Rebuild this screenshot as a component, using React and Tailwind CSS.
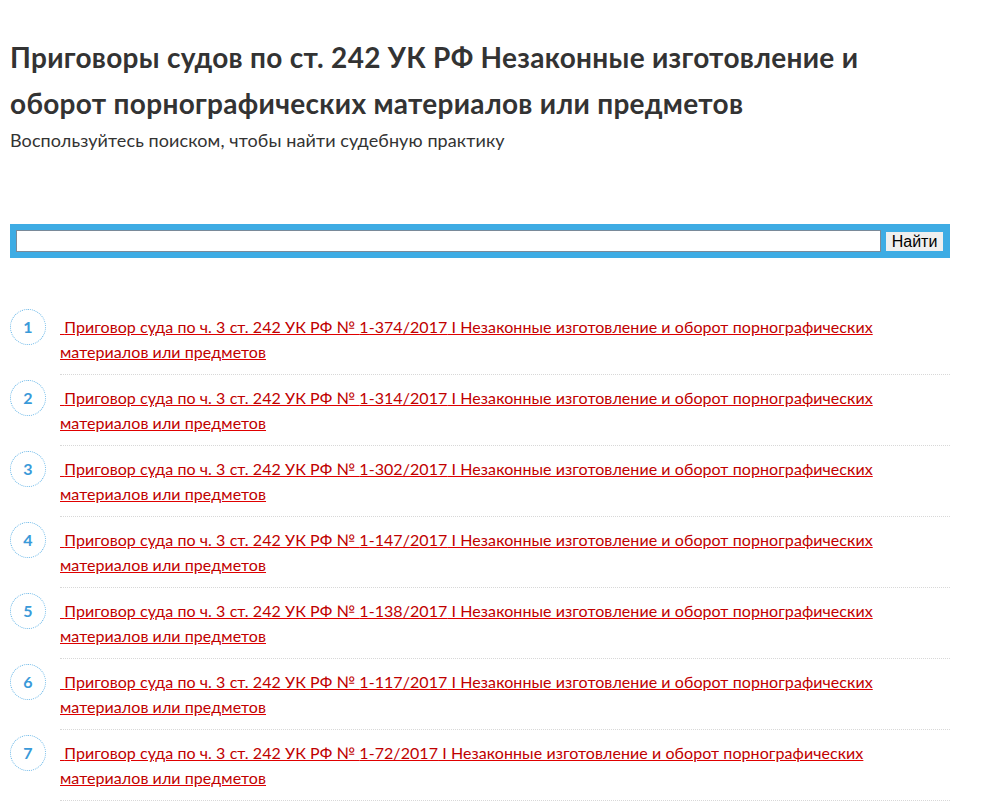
import React from 'react';

const items = [
  '1-374/2017',
  '1-314/2017',
  '1-302/2017',
  '1-147/2017',
  '1-138/2017',
  '1-117/2017',
  '1-72/2017',
];

export default function App() {
  return (
    <div className="min-h-screen bg-white px-[10px] text-[#333]" style={{ fontFamily: 'Lato, "Noto Sans", sans-serif' }}>
      {/* Header */}
      <h1 className="pt-[34px] w-[900px] text-[28px] font-bold leading-[46px] tracking-[0.3px] text-[#333]">
        Приговоры судов по ст. 242 УК РФ Незаконные изготовление и оборот порнографических материалов или предметов
      </h1>
      <p className="mt-[2px] text-[18px] leading-[24px] tracking-[0.1px]">Воспользуйтесь поиском, чтобы найти судебную практику</p>

      {/* Search */}
      <form className="mt-[72px] flex w-[940px] items-center gap-[5px] bg-[#3eace4] px-[6px] py-[6px]" onSubmit={(e) => e.preventDefault()}>
        <input type="text" className="h-[22px] w-[865px] border border-[#7a8a99] bg-white px-1 outline-none" />
        <button
          type="submit"
          className="h-[19px] w-[57px] bg-[#efefef] text-[16px] leading-[19px] text-black"
          style={{ fontFamily: '"Liberation Sans", Arial, sans-serif' }}
        >
          Найти
        </button>
      </form>

      {/* List */}
      <ul className="mt-[46px] w-[940px]">
        {items.map((num, i) => (
          <li key={num} className="flex items-start gap-[14px]">
            <div className="mt-[5px] flex h-9 w-9 shrink-0 items-center justify-center rounded-full border border-dotted border-[#6cb8e8] text-[16px] font-bold text-[#3a9ad9]">
              {i + 1}
            </div>
            <div className="flex-1 border-b border-dotted border-[#d8d8d8] py-[10px] pr-[20px] text-[16px] leading-[25px] tracking-[0.07px]">
              <a href="#" className="text-[#c00000] underline decoration-[#e00000]">
                {'\u00a0'}Приговор суда по ч. 3 ст. 242 УК РФ № {num} I Незаконные изготовление и оборот порнографических материалов или предметов
              </a>
            </div>
          </li>
        ))}
      </ul>
    </div>
  );
}
